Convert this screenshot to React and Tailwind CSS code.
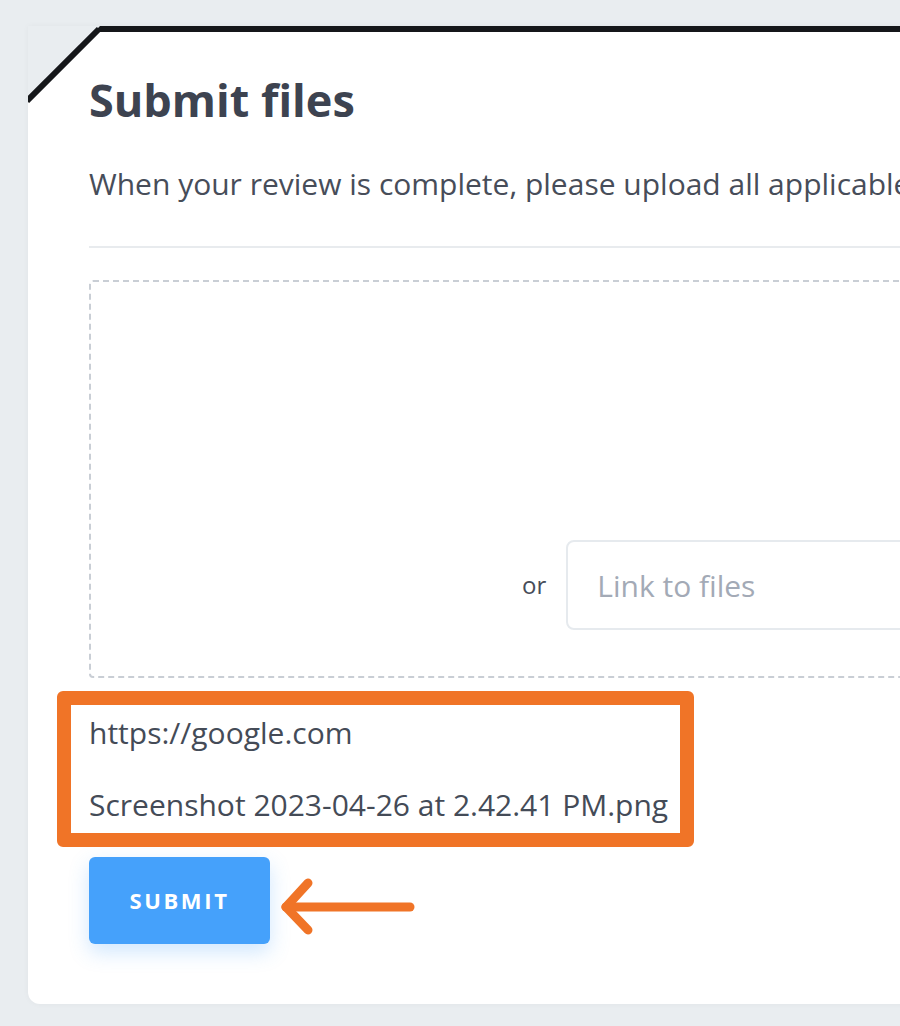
import React from 'react';

const font = { fontFamily: '"Open Sans", "Noto Sans", sans-serif' };

const files = ['https://google.com', 'Screenshot 2023-04-26 at 2.42.41 PM.png'];

const CornerCut = () => (
    <svg className="absolute left-0 top-[-6px]" width="76" height="80" viewBox="0 0 76 80">
        <polygon points="0,0 72,0 0,74" fill="#e9edf0" />
        <line x1="71" y1="3" x2="-1" y2="75" stroke="#15171a" strokeWidth="6" />
    </svg>
);

const Arrow = () => (
    <svg width="140" height="60" viewBox="0 0 140 60" className="ml-[8px] mt-[20px]">
        <g stroke="#f07427" strokeWidth="9" strokeLinecap="round" strokeLinejoin="round" fill="none">
            <line x1="8" y1="30" x2="132" y2="30" />
            <polyline points="30,6 8,30 30,53" />
        </g>
    </svg>
);

export default function App() {
    return (
        <div className="min-h-screen w-full overflow-hidden bg-[#e9edf0] pt-[26px] pl-[28px]" style={font}>
            <div className="relative w-[1000px] bg-white border-t-[6px] border-[#15171a] rounded-bl-xl shadow-[0_0_6px_rgba(0,0,0,0.04)] pl-[61px] pt-[40px] pb-[60px]">
                <CornerCut />
                <h1 className="text-[45px] leading-[55px] font-bold text-[#3d4350]">Submit files</h1>
                <p className="mt-[36px] text-[30px] leading-[42px] text-[#474d59] whitespace-nowrap">
                    When your review is complete, please upload all applicable files.
                </p>
                <div className="mt-[41px] h-[2px] bg-[#e8ebee]" />

                <div className="mt-[32px] h-[398px] border-2 border-dashed border-[#c9ced5] rounded flex flex-col justify-end pb-[46px]">
                    <div className="flex items-center pl-[431px]">
                        <span className="text-[24px] text-[#474d59] mr-[20px]">or</span>
                        <input
                            type="text"
                            placeholder="Link to files"
                            className="h-[90px] w-[420px] border-2 border-[#e6eaee] rounded-lg pl-[29px] text-[30px] text-[#474d59] placeholder:text-[#a3aab6] outline-none"
                        />
                    </div>
                </div>

                <div className="relative mt-[34px] flex flex-col gap-[30px]">
                    {files.map((f) => (
                        <div key={f} className="text-[30px] leading-[42px] text-[#444b57]">{f}</div>
                    ))}
                    <div className="absolute left-[-32px] top-[-21px] w-[637px] h-[156px] border-[14px] border-[#f07427] rounded-md pointer-events-none" />
                </div>

                <div className="mt-[31px] flex items-start">
                    <button className="w-[181px] h-[87px] bg-[#45a1fb] rounded-md text-white text-[22px] font-bold tracking-[0.12em] shadow-[0_8px_20px_rgba(69,161,251,0.25)]">
                        SUBMIT
                    </button>
                    <Arrow />
                </div>
            </div>
        </div>
    );
}
